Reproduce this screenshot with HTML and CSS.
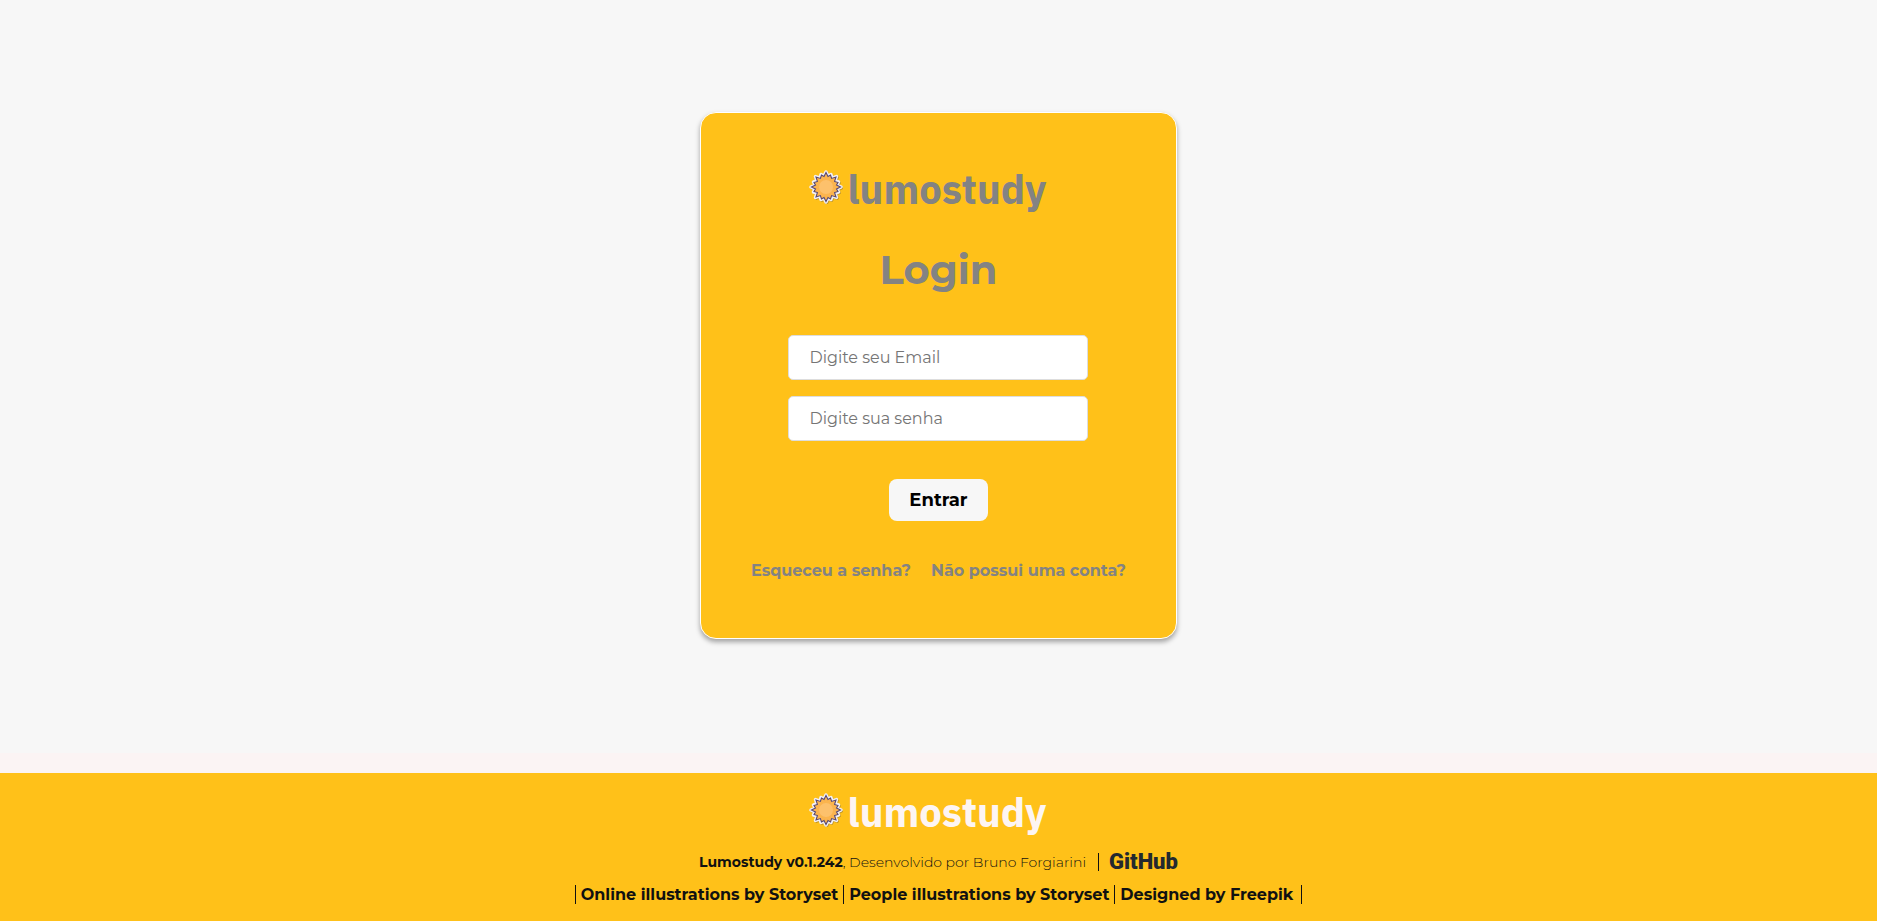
FILE: index.html
```html
<!DOCTYPE html>
<html lang="pt-BR">
<head>
<meta charset="utf-8">
<title>Lumostudy - Login</title>
<link rel="stylesheet" href="styles.css">
</head>
<body>
<svg class="defs" aria-hidden="true">
  <symbol id="sun" viewBox="0 0 34 34">
    <path d="M17 2L19 6L22 4.500L23 8L27.500 6.500L26 11L29.500 12L28 15L32 17L28 19L29.500 22L26 23L27.500 27.500L23 26L22 29.500L19 28L17 32L15 28L12 29.500L11 26L6.500 27.500L8 23L4.500 22L6 19L2 17L6 15L4.500 12L8 11L6.500 6.500L11 8L12 4.500L15 6Z" fill="#7a6430" stroke="#7a6430" stroke-width="3" stroke-linejoin="round" opacity=".5" transform="translate(.8 .9)"/>
    <path d="M17 2L19 6L22 4.500L23 8L27.500 6.500L26 11L29.500 12L28 15L32 17L28 19L29.500 22L26 23L27.500 27.500L23 26L22 29.500L19 28L17 32L15 28L12 29.500L11 26L6.500 27.500L8 23L4.500 22L6 19L2 17L6 15L4.500 12L8 11L6.500 6.500L11 8L12 4.500L15 6Z" fill="#f4f1f4" stroke="#f4f1f4" stroke-width="3.400" stroke-linejoin="round"/>
    <path d="M17 2.500L19 6.500L21.500 5L22.600 8.400L27 7L25.600 11.400L29 12.500L27.500 15L31.500 17L27.500 19L29 21.500L25.600 22.600L27 27L22.600 25.600L21.500 29L19 27.500L17 31.500L15 27.500L12.500 29L11.400 25.600L7 27L8.400 22.600L5 21.500L6.500 19L2.500 17L6.500 15L5 12.500L8.400 11.400L7 7L11.400 8.400L12.500 5L15 6.500Z" fill="#fbb44e" stroke="#574873" stroke-width="1.100"/>
    <circle cx="17" cy="17" r="7" fill="#fdc16c"/>
  </symbol>
</svg>

<main class="page">
  <form class="card">
    <div class="logo logo-gray">
      <svg class="logo-sun" aria-hidden="true"><use href="#sun"/></svg>
      <span class="logo-name">lumostudy</span>
    </div>
    <h1 class="title">Login</h1>
    <div class="fields">
      <input class="field" type="email" placeholder="Digite seu Email" aria-label="Email">
      <input class="field" type="password" placeholder="Digite sua senha" aria-label="Senha">
    </div>
    <button class="submit" type="submit">Entrar</button>
    <nav class="links">
      <a href="#senha">Esqueceu a senha?</a>
      <a href="#conta">Não possui uma conta?</a>
    </nav>
  </form>
</main>

<footer class="footer">
  <div class="logo logo-light">
    <svg class="logo-sun" aria-hidden="true"><use href="#sun"/></svg>
    <span class="logo-name">lumostudy</span>
  </div>
  <div class="about">
    <p class="version"><strong>Lumostudy v0.1.242</strong>, Desenvolvido por Bruno Forgiarini</p>
    <a class="github" href="#github">GitHub</a>
  </div>
  <div class="credits">
    <a href="#online">Online illustrations by Storyset</a>
    <a href="#people">People illustrations by Storyset</a>
    <a href="#freepik">Designed by Freepik</a>
  </div>
</footer>
</body>
</html>
```
FILE: styles.css
```css
* { box-sizing: border-box; }

body {
  margin: 0;
  min-height: 100vh;
  display: flex;
  flex-direction: column;
  background: #fbf4f4;
  font-family: Montserrat, Inter, sans-serif;
  font-size: 16px;
  color: #111;
}

.defs { position: absolute; width: 0; height: 0; }

.page {
  flex: 1;
  display: flex;
  align-items: center;
  justify-content: center;
  margin-bottom: 20px;
  padding-bottom: 2px;
  background: #f7f7f7;
}

.card {
  display: flex;
  flex-direction: column;
  align-items: center;
  padding: 51px 50px 55px;
  border: 1px solid #fff;
  border-radius: 16px;
  background: #ffc119;
  box-shadow: 0 3px 5px rgba(0, 0, 0, .35);
}

.logo {
  display: flex;
  align-items: center;
  gap: 5px;
  height: 50px;
  padding-right: 22px;
}
.logo-sun { width: 34px; height: 34px; margin-bottom: 4px; }
.logo-name {
  font: bold 40px/50px "IBM Plex Sans", Roboto, sans-serif;
}
.logo-gray { color: #838383; }
.logo-light { color: #fdf5f3; }

.title {
  margin: 31px 0 41px;
  font-size: 40px;
  line-height: 49px;
  color: #838383;
}

.fields { display: flex; flex-direction: column; gap: 16px; }
.field {
  width: 300px;
  height: 45px;
  padding: 0 20px;
  border: 1px solid #ddd;
  border-radius: 5px;
  background: #fff;
  font: 16px Montserrat, Inter, sans-serif;
}
.field::placeholder { color: #757575; }

.submit {
  margin: 38px 0;
  padding: 0 20px;
  height: 42px;
  border: 0;
  border-radius: 8px;
  background: #f7f7f7;
  color: #000;
  font: bold 18px Montserrat, Inter, sans-serif;
}

.links { display: flex; gap: 20px; }
.links a {
  color: #838383;
  font-weight: 700;
  line-height: 24px;
  text-decoration: none;
}

.footer {
  display: flex;
  flex-direction: column;
  align-items: center;
  padding: 14px 0 17px;
  background: #ffc119;
}

.about { display: flex; align-items: center; margin-top: 16px; }
.version {
  margin: 0;
  padding-right: 12px;
  border-right: 1px solid #111;
  font-size: 14px;
  font-weight: 300;
  line-height: 18px;
}
.version strong { font-weight: 700; }
.github {
  margin-left: 10px;
  color: #24292f;
  font: 900 22px/18px Roboto, sans-serif;
  text-decoration: none;
}

.credits { display: flex; margin-top: 14px; border-left: 1px solid #111; }
.credits a {
  padding: 0 5px;
  border-right: 1px solid #111;
  color: #111;
  font-weight: 700;
  line-height: 19px;
  text-decoration: none;
}
.credits a:last-child { padding-right: 8px; }
```
